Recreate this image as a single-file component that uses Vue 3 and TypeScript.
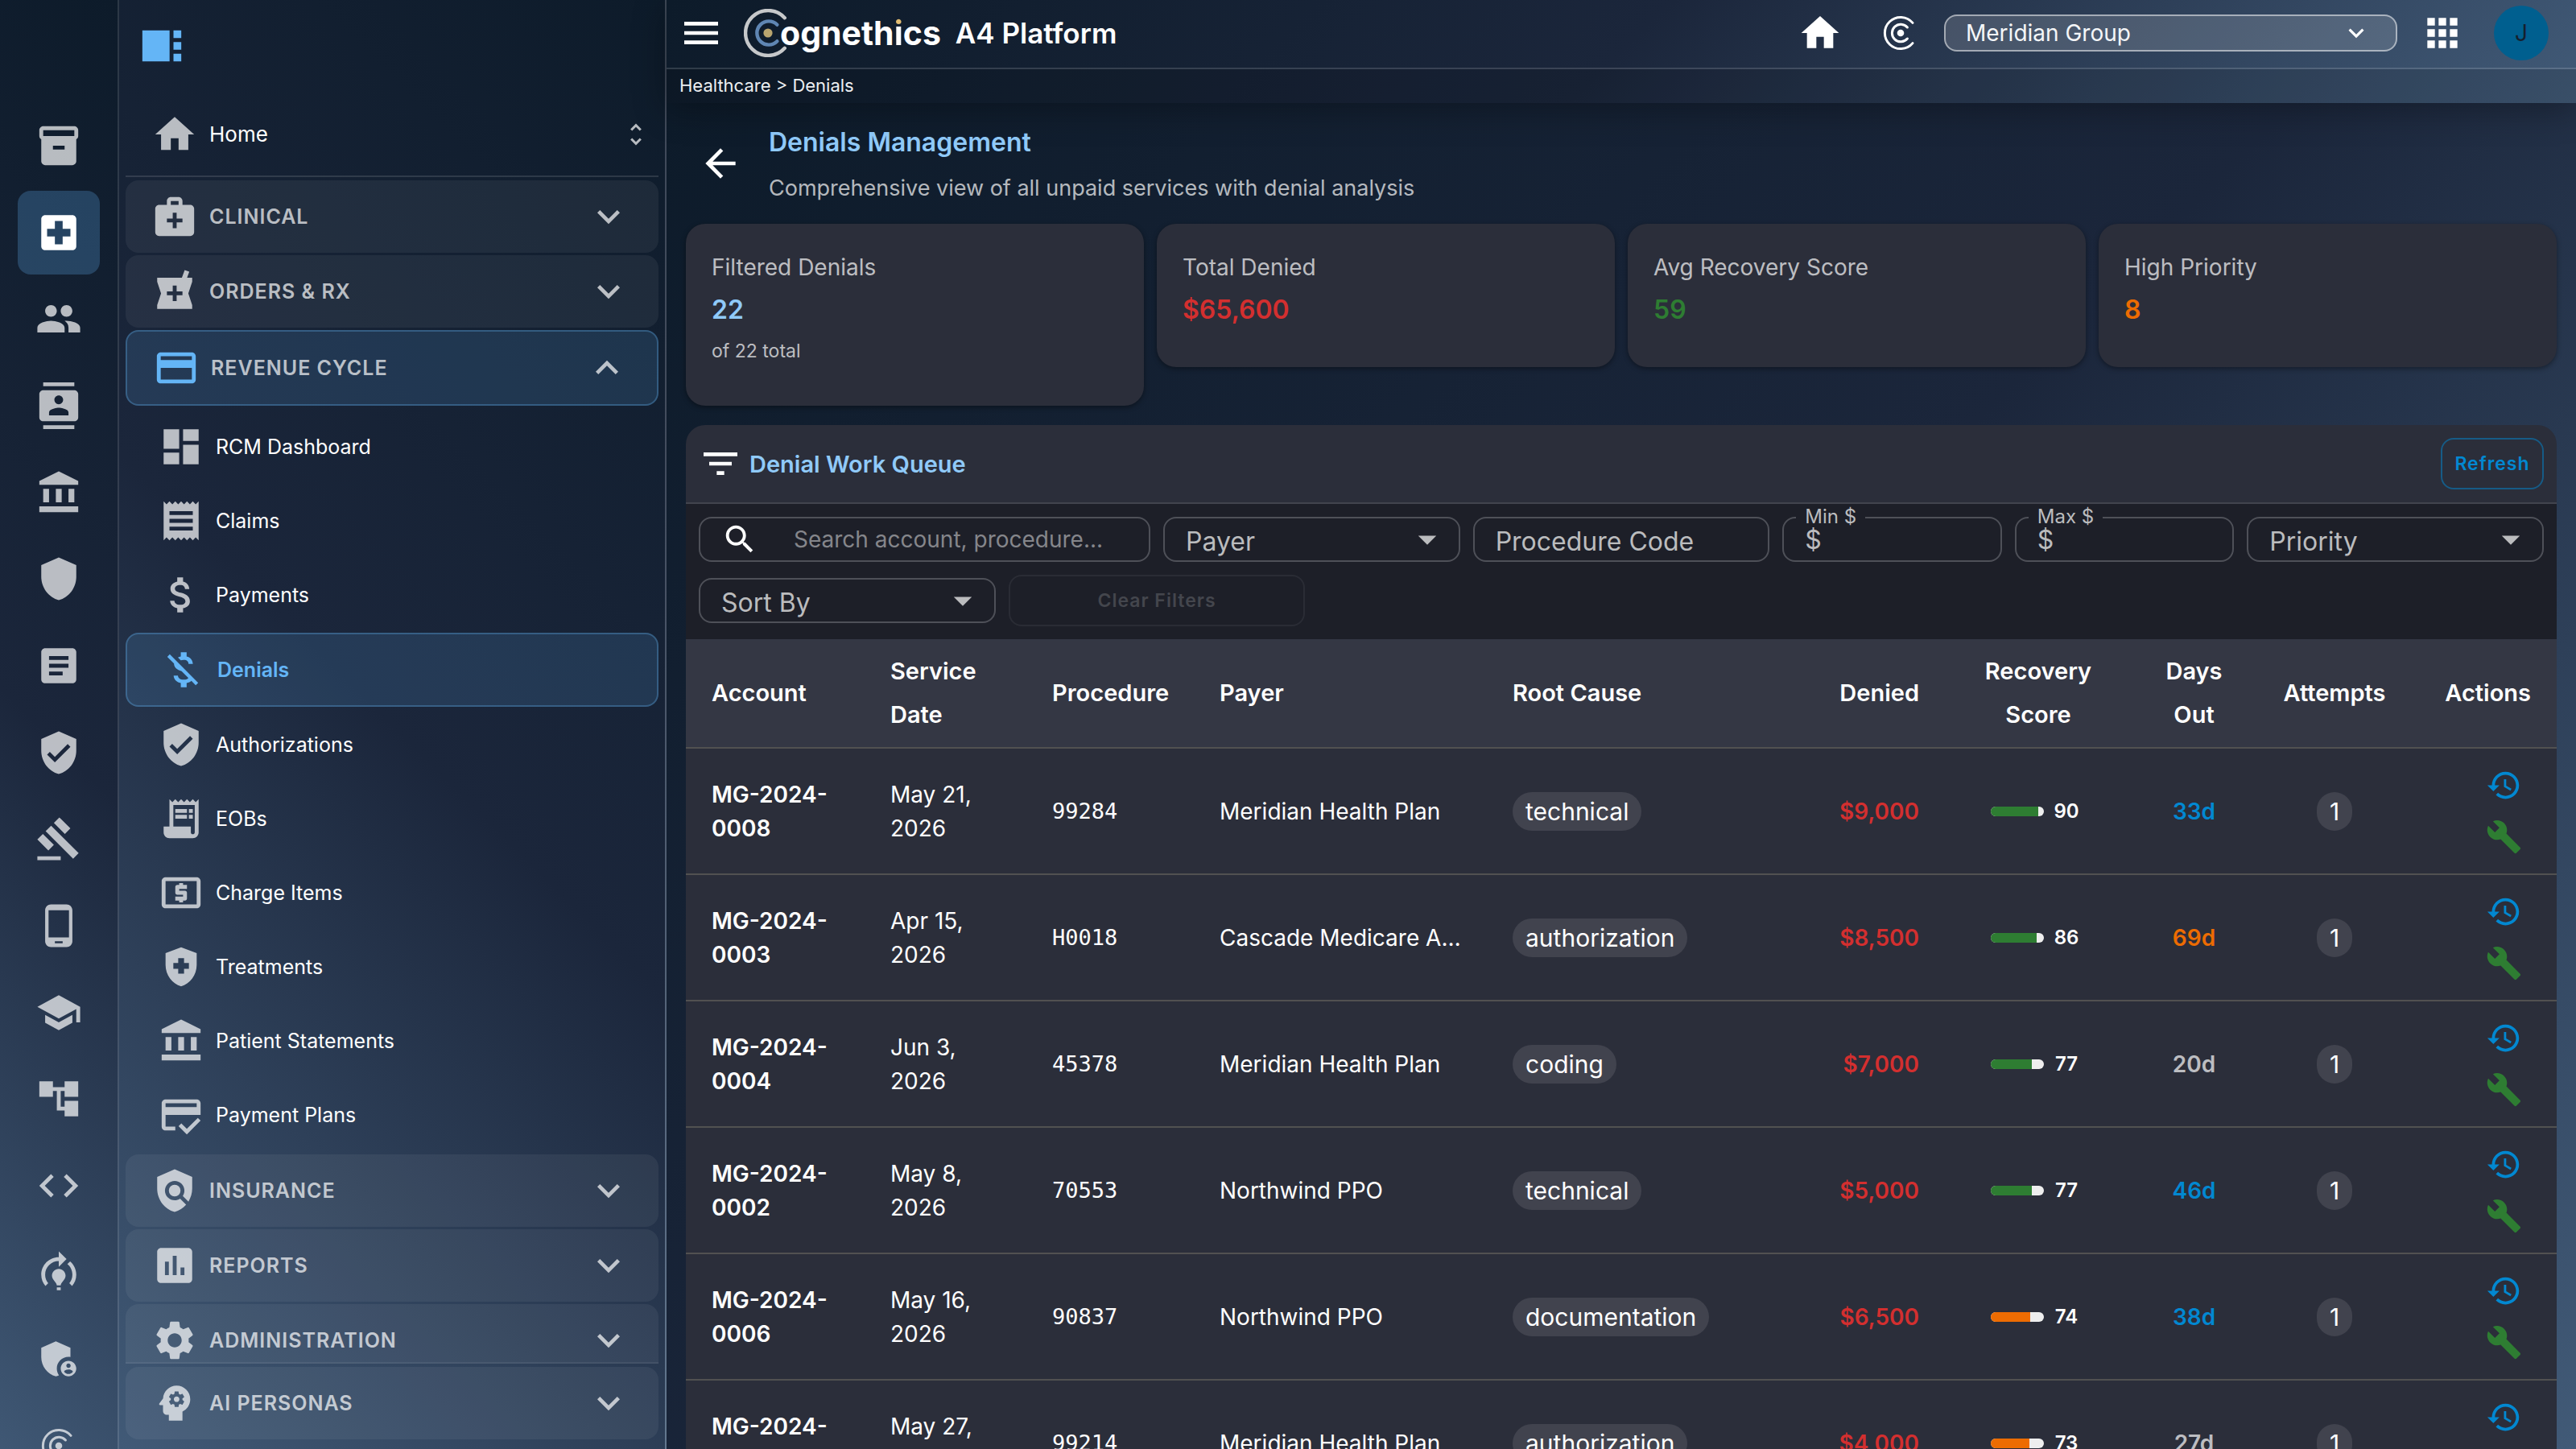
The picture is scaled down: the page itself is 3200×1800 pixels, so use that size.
<script setup lang="ts">
import { h, ref } from 'vue'

const paths: Record<string, string> = {
  archive: 'M20 2H4c-1 0-2 .9-2 2v3.01c0 .72.43 1.34 1 1.69V20c0 1.1 1.1 2 2 2h14c.9 0 2-.9 2-2V8.7c.57-.35 1-.97 1-1.69V4c0-1.1-1-2-2-2zm-5 12H9v-2h6v2zm5-7H4V4h16v3z',
  hospital: 'M19 3H5c-1.1 0-1.99.9-1.99 2L3 19c0 1.1.9 2 2 2h14c1.1 0 2-.9 2-2V5c0-1.1-.9-2-2-2zm-1 11h-4v4h-4v-4H6v-4h4V6h4v4h4v4z',
  people: 'M16 11c1.66 0 2.99-1.34 2.99-3S17.66 5 16 5s-3 1.34-3 3 1.34 3 3 3zm-8 0c1.66 0 2.99-1.34 2.99-3S9.66 5 8 5 5 6.34 5 8s1.34 3 3 3zm0 2c-2.33 0-7 1.17-7 3.5V19h14v-2.5c0-2.33-4.67-3.5-7-3.5zm8 0c-.29 0-.62.02-.97.05 1.16.84 1.97 1.97 1.97 3.45V19h6v-2.5c0-2.33-4.67-3.5-7-3.5z',
  contacts: 'M20 0H4v2h16V0zM4 24h16v-2H4v2zM20 4H4c-1.1 0-2 .9-2 2v12c0 1.1.9 2 2 2h16c1.1 0 2-.9 2-2V6c0-1.1-.9-2-2-2zm-8 2.75c1.24 0 2.25 1.01 2.25 2.25s-1.01 2.25-2.25 2.25S9.75 10.24 9.75 9 10.76 6.75 12 6.75zM17 17H7v-1.5c0-1.67 3.33-2.5 5-2.5s5 .83 5 2.5V17z',
  bank: 'M4 10h3v7H4zM10.5 10h3v7h-3zM2 19h20v3H2zM17 10h3v7h-3zM12 1 2 6v2h20V6z',
  shield: 'M12 1 3 5v6c0 5.55 3.84 10.74 9 12 5.16-1.26 9-6.45 9-12V5l-9-4z',
  article: 'M19 3H5c-1.1 0-2 .9-2 2v14c0 1.1.9 2 2 2h14c1.1 0 2-.9 2-2V5c0-1.1-.9-2-2-2zm-5 14H7v-2h7v2zm3-4H7v-2h10v2zm0-4H7V7h10v2z',
  verified: 'M12 1L3 5v6c0 5.55 3.84 10.74 9 12 5.16-1.26 9-6.45 9-12V5l-9-4zm-2 16l-4-4 1.41-1.41L10 14.17l6.59-6.59L18 9l-8 8z',
  gavel: 'M1 21h12v2H1zM5.245 8.07l2.83-2.827 14.14 14.142-2.828 2.828zM12.317 1l5.657 5.656-2.83 2.83-5.654-5.66zM3.825 9.485l5.657 5.657-2.828 2.828-5.657-5.657z',
  phone: 'M16 1H8C6.34 1 5 2.34 5 4v16c0 1.66 1.34 3 3 3h8c1.66 0 3-1.34 3-3V4c0-1.66-1.34-3-3-3zm-2 20h-4v-1h4v1zm3.25-3H6.75V4h10.5v14z',
  school: 'M5 13.18v4L12 21l7-3.82v-4L12 17l-7-3.82zM12 3L1 9l11 6 9-4.91V17h2V9L12 3z',
  tree: 'M22 11V3h-7v3H9V3H2v8h7V8h2v10h4v3h7v-8h-7v3h-2V8h2v3z',
  code: 'M9.4 16.6L4.8 12l4.6-4.6L8 6l-6 6 6 6 1.4-1.4zm5.2 0l4.6-4.6-4.6-4.6L16 6l6 6-6 6-1.4-1.4z',
  training: 'M15.5 13.5c0 2-2.5 3.5-2.5 5h-2c0-1.5-2.5-3-2.5-5 0-1.93 1.57-3.5 3.5-3.5s3.5 1.57 3.5 3.5zm-2.5 6h-2V21h2v-1.5zm6-6.5c0 1.68-.59 3.21-1.58 4.42l1.42 1.42C20.18 17.27 21 15.23 21 13c0-2.74-1.23-5.19-3.16-6.84l-1.42 1.42C17.99 8.86 19 10.82 19 13zm-3-8-4-4v3c-4.97 0-9 4.03-9 9 0 2.23.82 4.27 2.16 5.84l1.42-1.42C5.59 16.21 5 14.68 5 13c0-3.86 3.14-7 7-7v3l4-4z',
  admin: 'M17 11c.34 0 .67.04 1 .09V6.27L10.5 3 3 6.27v4.91c0 4.54 3.2 8.79 7.5 9.82.55-.13 1.08-.32 1.6-.55-.69-.98-1.1-2.17-1.1-3.45 0-3.31 2.69-6 6-6zM17 13c-2.21 0-4 1.79-4 4s1.79 4 4 4 4-1.79 4-4-1.79-4-4-4zm0 1.38c.62 0 1.12.51 1.12 1.12s-.51 1.12-1.12 1.12-1.12-.51-1.12-1.12.5-1.12 1.12-1.12zm0 5.37c-.93 0-1.74-.46-2.24-1.17.05-.72 1.51-1.08 2.24-1.08s2.19.36 2.24 1.08c-.5.71-1.31 1.17-2.24 1.17z',
  sidebar: 'M16 20H2V4h14v16zm2-12h4V4h-4v4zm0 12h4v-4h-4v4zm0-6h4v-4h-4v4z',
  home: 'M10 20v-6h4v6h5v-8h3L12 3 2 12h3v8z',
  unfold: 'M12 5.83L15.17 9l1.41-1.41L12 3 7.41 7.59 8.83 9 12 5.83zm0 12.34L8.83 15l-1.41 1.41L12 21l4.59-4.59L15.17 15 12 18.17z',
  medical: 'M20 6h-4V4c0-1.1-.9-2-2-2h-4c-1.1 0-2 .9-2 2v2H4c-1.1 0-2 .9-2 2v12c0 1.1.9 2 2 2h16c1.1 0 2-.9 2-2V8c0-1.1-.9-2-2-2zM10 4h4v2h-4V4zm6 11h-3v3h-2v-3H8v-2h3v-3h2v3h3v2z',
  pharmacy: 'M21 5h-2.64l1.14-3.14L17.15 1l-1.46 4H3v2l2 6-2 6v2h18v-2l-2-6 2-6V5zm-5 9h-3v3h-2v-3H8v-2h3V9h2v3h3v2z',
  card: 'M20 4H4c-1.11 0-1.99.89-1.99 2L2 18c0 1.11.89 2 2 2h16c1.11 0 2-.89 2-2V6c0-1.11-.89-2-2-2zm0 14H4v-6h16v6zm0-10H4V6h16v2z',
  dashboard: 'M3 13h8V3H3v10zm0 8h8v-6H3v6zm10 0h8V11h-8v10zm0-18v6h8V3h-8z',
  receipt: 'M18 17H6v-2h12v2zm0-4H6v-2h12v2zm0-4H6V7h12v2zM3 22l1.5-1.5L6 22l1.5-1.5L9 22l1.5-1.5L12 22l1.5-1.5L15 22l1.5-1.5L18 22l1.5-1.5L21 22V2l-1.5 1.5L18 2l-1.5 1.5L15 2l-1.5 1.5L12 2l-1.5 1.5L9 2 7.5 3.5 6 2 4.5 3.5 3 2v20z',
  money: 'M11.8 10.9c-2.27-.59-3-1.2-3-2.15 0-1.09 1.01-1.85 2.7-1.85 1.78 0 2.44.85 2.5 2.1h2.21c-.07-1.72-1.12-3.3-3.21-3.81V3h-3v2.16c-1.94.42-3.5 1.68-3.5 3.61 0 2.31 1.91 3.46 4.7 4.13 2.5.6 3 1.48 3 2.41 0 .69-.49 1.79-2.7 1.79-2.06 0-2.87-.92-2.98-2.1h-2.2c.12 2.19 1.76 3.42 3.68 3.83V21h3v-2.15c1.95-.37 3.5-1.5 3.5-3.55 0-2.84-2.43-3.81-4.7-4.4z',
  moneyOff: 'M12.5 6.9c1.78 0 2.44.85 2.5 2.1h2.21c-.07-1.72-1.12-3.3-3.21-3.81V3h-3v2.16c-.53.12-1.03.3-1.48.54l1.47 1.47c.41-.17.91-.27 1.51-.27zM5.33 4.06L4.06 5.33 7.5 8.77c0 2.08 1.56 3.21 3.91 3.91l3.51 3.51c-.34.48-1.05.91-2.42.91-2.06 0-2.87-.92-2.98-2.1h-2.2c.12 2.19 1.76 3.42 3.68 3.83V21h3v-2.15c.96-.18 1.82-.55 2.45-1.12l2.22 2.22 1.27-1.27L5.33 4.06z',
  receiptLong: 'M19.5 3.5 18 2l-1.5 1.5L15 2l-1.5 1.5L12 2l-1.5 1.5L9 2 7.5 3.5 6 2v14H3v3c0 1.66 1.34 3 3 3h12c1.66 0 3-1.34 3-3V2l-1.5 1.5zM19 19c0 .55-.45 1-1 1s-1-.45-1-1v-3H8V5h11v14zM9 7h6v2H9zM16 7h2v2h-2zM9 10h6v2H9zM16 10h2v2h-2z',
  atm: 'M11 17h2v-1h1c.55 0 1-.45 1-1v-3c0-.55-.45-1-1-1h-3v-1h4V8h-2V7h-2v1h-1c-.55 0-1 .45-1 1v3c0 .55.45 1 1 1h3v1H9v2h2v1zM20 4H4c-1.11 0-1.99.89-1.99 2L2 18c0 1.11.89 2 2 2h16c1.11 0 2-.89 2-2V6c0-1.11-.89-2-2-2zm0 14H4V6h16v12z',
  health: 'M10.5 13H8v-3h2.5V7.5h3V10H16v3h-2.5v2.5h-3V13zM12 2 4 5v6.09c0 5.05 3.41 9.76 8 10.91 4.59-1.15 8-5.86 8-10.91V5l-8-3z',
  creditScore: 'M20 4H4c-1.11 0-1.99.89-1.99 2L2 18c0 1.11.89 2 2 2h5v-2H4v-6h18V6c0-1.11-.89-2-2-2zm0 4H4V6h16v2zm-5.07 11.17-2.83-2.83-1.41 1.41L14.93 22 22 14.93l-1.41-1.41-5.66 5.65z',
  policy: 'M21 5l-9-4-9 4v6c0 5.55 3.84 10.74 9 12 2.3-.56 4.33-1.9 5.88-3.71l-3.12-3.12c-1.94 1.29-4.58 1.07-6.29-.64-1.95-1.95-1.95-5.12 0-7.07 1.95-1.95 5.12-1.95 7.07 0 1.71 1.71 1.92 4.35.64 6.29l2.9 2.9C20.29 15.69 21 13.38 21 11V5zM12 9a3 3 0 1 0 0 6 3 3 0 0 0 0-6z',
  assessment: 'M19 3H5c-1.1 0-2 .9-2 2v14c0 1.1.9 2 2 2h14c1.1 0 2-.9 2-2V5c0-1.1-.9-2-2-2zM9 17H7v-7h2v7zm4 0h-2V7h2v10zm4 0h-2v-4h2v4z',
  settings: 'M19.14 12.94c.04-.3.06-.61.06-.94 0-.32-.02-.64-.07-.94l2.03-1.58c.18-.14.23-.41.12-.61l-1.92-3.32c-.12-.22-.37-.29-.59-.22l-2.39.96c-.5-.38-1.03-.7-1.62-.94l-.36-2.54c-.04-.24-.24-.41-.48-.41h-3.84c-.24 0-.43.17-.47.41l-.36 2.54c-.59.24-1.13.57-1.62.94l-2.39-.96c-.22-.08-.47 0-.59.22L2.74 8.87c-.12.21-.08.47.12.61l2.03 1.58c-.05.3-.09.63-.09.94s.02.64.07.94l-2.03 1.58c-.18.14-.23.41-.12.61l1.92 3.32c.12.22.37.29.59.22l2.39-.96c.5.38 1.03.7 1.62.94l.36 2.54c.05.24.24.41.48.41h3.84c.24 0 .44-.17.47-.41l.36-2.54c.59-.24 1.13-.56 1.62-.94l2.39.96c.22.08.47 0 .59-.22l1.92-3.32c.12-.22.07-.47-.12-.61l-2.01-1.58zM12 15.6c-1.98 0-3.6-1.62-3.6-3.6s1.62-3.6 3.6-3.6 3.6 1.62 3.6 3.6-1.62 3.6-3.6 3.6z',
  psychology: 'M13 8.57c-.79 0-1.43.64-1.43 1.43s.64 1.43 1.43 1.43 1.43-.64 1.43-1.43-.64-1.43-1.43-1.43zM13 3C9.25 3 6.2 5.94 6.02 9.64L4.1 12.2c-.25.33-.01.8.4.8H6v3c0 1.1.9 2 2 2h1v3h7v-4.68c2.36-1.12 4-3.53 4-6.32 0-3.87-3.13-7-7-7zm3 7c0 .13-.01.26-.02.39l.83.66c.08.06.1.16.05.25l-.8 1.39c-.05.09-.16.12-.24.09l-.99-.4c-.21.16-.43.29-.67.39L14 13.83c-.01.1-.1.17-.2.17h-1.6c-.1 0-.18-.07-.2-.17l-.15-1.06c-.25-.1-.47-.23-.68-.39l-.99.4c-.09.03-.2 0-.25-.09l-.8-1.39c-.05-.08-.03-.19.05-.25l.84-.66c-.01-.13-.02-.26-.02-.39s.02-.27.04-.39l-.85-.66c-.08-.06-.1-.16-.05-.26l.8-1.38c.05-.09.15-.12.24-.09l1 .4c.2-.15.43-.29.67-.39L12 6.17c.02-.1.1-.17.2-.17h1.6c.1 0 .18.07.2.17l.15 1.06c.24.1.46.23.67.39l1-.4c.09-.03.2 0 .24.09l.8 1.38c.05.09.03.2-.05.26l-.85.66c.03.12.04.25.04.39z',
  down: 'M16.59 8.59L12 13.17 7.41 8.59 6 10l6 6 6-6z',
  up: 'M12 8l-6 6 1.41 1.41L12 10.83l4.59 4.58L18 14z',
  menu: 'M3 18h18v-2H3v2zm0-5h18v-2H3v2zm0-7v2h18V6H3z',
  apps: 'M4 8h4V4H4v4zm6 12h4v-4h-4v4zm-6 0h4v-4H4v4zm0-6h4v-4H4v4zm6 0h4v-4h-4v4zm6-10v4h4V4h-4zm-6 4h4V4h-4v4zm6 6h4v-4h-4v4zm0 6h4v-4h-4v4z',
  back: 'M20 11H7.83l5.59-5.59L12 4l-8 8 8 8 1.41-1.41L7.83 13H20v-2z',
  filter: 'M10 18h4v-2h-4v2zM3 6v2h18V6H3zm3 7h12v-2H6v2z',
  search: 'M15.5 14h-.79l-.28-.27C15.41 12.59 16 11.11 16 9.5 16 5.91 13.09 3 9.5 3S3 5.91 3 9.5 5.91 16 9.5 16c1.61 0 3.09-.59 4.23-1.57l.27.28v.79l5 4.99L20.49 19l-4.99-5zm-6 0C7.01 14 5 11.99 5 9.5S7.01 5 9.5 5 14 7.01 14 9.5 11.99 14 9.5 14z',
  caret: 'M7 10l5 5 5-5z',
  history: 'M13 3c-4.97 0-9 4.03-9 9H1l3.89 3.89.07.14L9 12H6c0-3.87 3.13-7 7-7s7 3.13 7 7-3.13 7-7 7c-1.93 0-3.68-.79-4.94-2.06l-1.42 1.42C8.27 19.99 10.51 21 13 21c4.97 0 9-4.03 9-9s-4.03-9-9-9zm-1 5v5l4.28 2.54.72-1.21-3.5-2.08V8H12z',
  build: 'M22.7 19l-9.1-9.1c.9-2.3.4-5-1.5-6.9-2-2-5-2.4-7.4-1.3L9 6 6 9 1.6 4.7C.4 7.1.9 10.1 2.9 12.1c1.9 1.9 4.6 2.4 6.9 1.5l9.1 9.1c.4.4 1 .4 1.4 0l2.3-2.3c.5-.4.5-1.1.1-1.4z',
}

const Icon = (props: { name: string }) =>
  h('svg', { viewBox: '0 0 24 24', 'aria-hidden': 'true', fill: 'currentColor' }, [
    h('path', { d: paths[props.name], 'fill-rule': 'evenodd' }),
  ])
Icon.props = ['name']

// Concentric brand mark
const Mark = () =>
  h('svg', { viewBox: '0 0 44 44', 'aria-hidden': 'true', fill: 'none', stroke: 'currentColor', 'stroke-width': 3, 'stroke-linecap': 'round' }, [
    h('path', { d: 'M37 9.4a19.6 19.6 0 1 0 0 25.2' }),
    h('path', { d: 'M30.4 15a10.8 10.8 0 1 0 0 14' }),
    h('circle', { cx: 22, cy: 22, r: 4.3, fill: 'currentColor', stroke: 'none' }),
  ])

const rail = [
  ['archive', 'Records'], ['hospital', 'Healthcare'], ['people', 'People'], ['contacts', 'Contacts'],
  ['bank', 'Finance'], ['shield', 'Security'], ['article', 'Documents'], ['verified', 'Compliance'],
  ['gavel', 'Legal'], ['phone', 'Mobile'], ['school', 'Learning'], ['tree', 'Workflows'],
  ['code', 'Developer'], ['training', 'Models'], ['admin', 'Admin'],
]

const sections = [
  { icon: 'medical', label: 'Clinical' },
  { icon: 'pharmacy', label: 'Orders & Rx' },
  {
    icon: 'card', label: 'Revenue Cycle', open: true,
    items: [
      { icon: 'dashboard', label: 'RCM Dashboard' },
      { icon: 'receipt', label: 'Claims' },
      { icon: 'money', label: 'Payments' },
      { icon: 'moneyOff', label: 'Denials', active: true },
      { icon: 'verified', label: 'Authorizations' },
      { icon: 'receiptLong', label: 'EOBs' },
      { icon: 'atm', label: 'Charge Items' },
      { icon: 'health', label: 'Treatments' },
      { icon: 'bank', label: 'Patient Statements' },
      { icon: 'creditScore', label: 'Payment Plans' },
    ],
  },
  { icon: 'policy', label: 'Insurance' },
  { icon: 'assessment', label: 'Reports' },
  { icon: 'settings', label: 'Administration' },
]

const stats = [
  { label: 'Filtered Denials', value: '22', tone: 'primary', note: 'of 22 total' },
  { label: 'Total Denied', value: '$65,600', tone: 'error' },
  { label: 'Avg Recovery Score', value: '59', tone: 'success' },
  { label: 'High Priority', value: '8', tone: 'warning' },
]

const rows = [
  { account: 'MG-2024-0008', date: 'May 21, 2026', code: '99284', payer: 'Meridian Health Plan', cause: 'technical', denied: '$9,000', score: 90, days: 33 },
  { account: 'MG-2024-0003', date: 'Apr 15, 2026', code: 'H0018', payer: 'Cascade Medicare Advantage', cause: 'authorization', denied: '$8,500', score: 86, days: 69 },
  { account: 'MG-2024-0004', date: 'Jun 3, 2026', code: '45378', payer: 'Meridian Health Plan', cause: 'coding', denied: '$7,000', score: 77, days: 20 },
  { account: 'MG-2024-0002', date: 'May 8, 2026', code: '70553', payer: 'Northwind PPO', cause: 'technical', denied: '$5,000', score: 77, days: 46 },
  { account: 'MG-2024-0006', date: 'May 16, 2026', code: '90837', payer: 'Northwind PPO', cause: 'documentation', denied: '$6,500', score: 74, days: 38 },
  { account: 'MG-2024-0005', date: 'May 27, 2026', code: '99214', payer: 'Meridian Health Plan', cause: 'authorization', denied: '$4,000', score: 73, days: 27 },
]

const daysTone = (d: number) => (d > 60 ? 'warning' : d > 30 ? 'info' : 'muted')
const scoreTone = (s: number) => (s >= 75 ? 'good' : 'fair')

const search = ref('')
const procedure = ref('')
const min = ref('')
const max = ref('')
</script>

<template>
  <div class="app">
    <nav class="rail" aria-label="Modules">
      <button v-for="[icon, label] in rail" :key="label" class="rail-btn" :class="{ on: icon === 'hospital' }" :aria-label="label">
        <Icon :name="icon" class="ic" />
      </button>
      <button class="rail-btn" aria-label="Cognethics"><Mark class="mark" /></button>
    </nav>

    <aside class="side">
      <div class="side-top">
        <button class="collapse" aria-label="Collapse sidebar"><Icon name="sidebar" class="ic" /></button>
      </div>
      <a class="home" href="#">
        <Icon name="home" class="ic" /><span>Home</span><Icon name="unfold" class="unfold" />
      </a>
      <div class="side-scroll">
        <template v-for="s in sections" :key="s.label">
          <button class="section" :class="{ open: s.open }">
            <Icon :name="s.icon" class="ic" /><span>{{ s.label }}</span><Icon :name="s.open ? 'up' : 'down'" class="chev" />
          </button>
          <ul v-if="s.items" class="items">
            <li v-for="i in s.items" :key="i.label">
              <a href="#" class="item" :class="{ active: i.active }"><Icon :name="i.icon" class="ic" /><span>{{ i.label }}</span></a>
            </li>
          </ul>
        </template>
      </div>
      <div class="side-foot">
        <button class="section"><Icon name="psychology" class="ic" /><span>AI Personas</span><Icon name="down" class="chev" /></button>
      </div>
    </aside>

    <div class="page">
      <header class="top">
        <div class="bar">
          <button class="plain" aria-label="Menu"><Icon name="menu" class="ic56" /></button>
          <div class="brand">
            <svg class="logo" viewBox="0 0 60 60" fill="none" stroke-linecap="round" aria-hidden="true">
              <path d="M50.8 11.2a28 28 0 1 0 0 37.6" stroke="#c6c8ca" stroke-width="4.4" />
              <path d="M41.4 19.8a14.6 14.6 0 1 0 0 20.4" stroke="#5f86b3" stroke-width="4.4" />
              <circle cx="30" cy="30" r="5.6" fill="#b9a56f" />
            </svg>
            <span class="word">ogneth<span class="gold">i</span>cs</span>
          </div>
          <span class="product">A4 Platform</span>
          <div class="tools">
            <button class="plain" aria-label="Home"><Icon name="home" class="ic56" /></button>
            <button class="plain" aria-label="Assistant"><Mark class="mark" /></button>
            <div class="org">
              <select aria-label="Organization"><option>Meridian Group</option></select>
              <Icon name="down" class="org-chev" />
            </div>
            <button class="plain" aria-label="Apps"><Icon name="apps" class="ic56" /></button>
            <button class="avatar" aria-label="Account">J</button>
          </div>
        </div>
        <div class="crumbs">Healthcare &gt; Denials</div>
      </header>

      <main class="main">
        <div class="title-row">
          <button class="plain back" aria-label="Back"><Icon name="back" class="ic56" /></button>
          <div>
            <h1>Denials Management</h1>
            <p>Comprehensive view of all unpaid services with denial analysis</p>
          </div>
        </div>

        <section class="stats">
          <article v-for="s in stats" :key="s.label" class="stat">
            <div class="stat-label">{{ s.label }}</div>
            <div class="stat-value" :class="s.tone">{{ s.value }}</div>
            <div v-if="s.note" class="stat-note">{{ s.note }}</div>
          </article>
        </section>

        <section class="queue">
          <div class="queue-head">
            <Icon name="filter" class="ic56" />
            <h2>Denial Work Queue</h2>
            <button class="refresh">Refresh</button>
          </div>

          <form class="filters" @submit.prevent>
            <div class="field w6">
              <Icon name="search" class="search-ic" />
              <input v-model="search" class="search" type="text" aria-label="Search" placeholder="Search account, procedure..." />
            </div>
            <div class="field w4">
              <select aria-label="Payer"><option>Payer</option></select><Icon name="caret" class="caret" />
            </div>
            <div class="field w4">
              <input v-model="procedure" class="big" type="text" aria-label="Procedure Code" placeholder="Procedure Code" />
            </div>
            <fieldset class="money w3">
              <legend><label for="min-amount">Min $</label></legend>
              <span>$</span><input id="min-amount" v-model="min" type="text" />
            </fieldset>
            <fieldset class="money w3">
              <legend><label for="max-amount">Max $</label></legend>
              <span>$</span><input id="max-amount" v-model="max" type="text" />
            </fieldset>
            <div class="field w4">
              <select aria-label="Priority"><option>Priority</option></select><Icon name="caret" class="caret" />
            </div>
            <div class="field w4">
              <select aria-label="Sort By"><option>Sort By</option></select><Icon name="caret" class="caret" />
            </div>
            <button class="clear w4" disabled>Clear Filters</button>
          </form>

          <table>
            <colgroup>
              <col class="c-acct" /><col class="c-date" /><col class="c-proc" /><col class="c-payer" /><col class="c-cause" />
              <col class="c-denied" /><col class="c-score" /><col class="c-days" /><col class="c-att" /><col class="c-act" />
            </colgroup>
            <thead>
              <tr>
                <th>Account</th><th>Service Date</th><th>Procedure</th><th>Payer</th><th>Root Cause</th>
                <th class="r">Denied</th><th class="c">Recovery Score</th><th class="c">Days Out</th><th class="c">Attempts</th><th class="r">Actions</th>
              </tr>
            </thead>
            <tbody>
              <tr v-for="r in rows" :key="r.account">
                <td class="acct">{{ r.account }}</td>
                <td>{{ r.date }}</td>
                <td class="mono">{{ r.code }}</td>
                <td class="payer">{{ r.payer }}</td>
                <td><span class="chip">{{ r.cause }}</span></td>
                <td class="r bold error">{{ r.denied }}</td>
                <td>
                  <div class="score">
                    <div class="track"><div class="fill" :class="scoreTone(r.score)" :style="{ width: r.score + '%' }"></div></div>
                    <span>{{ r.score }}</span>
                  </div>
                </td>
                <td class="c bold" :class="daysTone(r.days)">{{ r.days }}d</td>
                <td class="c"><span class="chip">1</span></td>
                <td class="acts">
                  <div class="act-col">
                    <button class="act info" aria-label="History"><Icon name="history" class="ic45" /></button>
                    <button class="act success" aria-label="Resolve"><Icon name="build" class="ic45" /></button>
                  </div>
                </td>
              </tr>
            </tbody>
          </table>
        </section>
      </main>
    </div>
  </div>
</template>

<style>
body { margin: 0; background: #0d1b2a; }
</style>

<style scoped>
.app {
  display: flex;
  height: 100vh;
  overflow: hidden;
  font-family: Inter, "Liberation Sans", sans-serif;
  font-size: 28px;
  color: #fff;
}
.app *, .app *::before { box-sizing: border-box; }
button, input, select { font: inherit; color: inherit; margin: 0; }
button { background: none; border: 0; padding: 0; cursor: pointer; }
a { color: inherit; text-decoration: none; }
svg { display: block; flex: none; }
h1, h2, p, ul { margin: 0; padding: 0; list-style: none; }
.ic { width: 58px; height: 58px; }
.ic56 { width: 56px; height: 56px; }
.ic45 { width: 45px; height: 45px; }
.mark { width: 44px; height: 44px; }
.plain { display: flex; }

/* Module rail */
.rail {
  flex: none;
  width: 148px;
  height: 1850px;
  padding-top: 127px;
  display: grid;
  grid-auto-rows: 1fr;
  place-items: center;
  border-right: 2px solid rgba(255, 255, 255, 0.12);
  background: linear-gradient(45deg, #415a77 0%, #1b263b 50%, #0d1b2a 100%);
}
.rail-btn {
  width: 102px;
  height: 104px;
  border-radius: 16px;
  display: flex;
  align-items: center;
  justify-content: center;
  color: rgba(255, 255, 255, 0.7);
}
.rail-btn.on { background: rgba(100, 181, 246, 0.25); color: #fff; }

/* Sidebar */
.side {
  flex: none;
  width: 680px;
  display: flex;
  flex-direction: column;
  padding: 0 8px 12px;
  border-right: 2px solid rgba(255, 255, 255, 0.18);
  background: linear-gradient(45deg, #415a77 0%, #1b263b 50%, #0d1b2a 100%);
}
.side-top { height: 115px; padding: 28px 0 0 16px; }
.collapse { color: #64b5f6; }
.home {
  display: flex;
  align-items: center;
  height: 105px;
  padding: 0 10px 0 32px;
  border-bottom: 2px solid rgba(255, 255, 255, 0.12);
  font-size: 26px;
}
.home .ic { color: rgba(255, 255, 255, 0.7); margin-right: 14px; }
.unfold { width: 36px; height: 36px; margin-left: auto; color: rgba(255, 255, 255, 0.7); }
.side-scroll { flex: 1; min-height: 0; overflow: hidden; padding-top: 4px; }
.section {
  width: 100%;
  height: 90px;
  margin-bottom: 3px;
  padding: 0 34px 0 32px;
  display: flex;
  align-items: center;
  border-radius: 16px;
  background: rgba(255, 255, 255, 0.06);
  color: rgba(255, 255, 255, 0.7);
  font-size: 25px;
  font-weight: 600;
  letter-spacing: 1px;
  text-transform: uppercase;
}
.section .ic { margin-right: 14px; }
.section .chev { width: 56px; height: 56px; margin-left: auto; }
.section.open {
  height: 94px;
  border: 2px solid rgba(100, 181, 246, 0.3);
  background: rgba(100, 181, 246, 0.15);
}
.section.open .ic { color: #64b5f6; }
.items { padding: 3px 0 2px; }
.item {
  display: flex;
  align-items: center;
  height: 90px;
  margin-bottom: 2px;
  padding-left: 40px;
  border-radius: 16px;
  font-size: 25px;
}
.item .ic { margin-right: 14px; color: rgba(255, 255, 255, 0.7); }
.item.active {
  height: 92px;
  border: 2px solid rgba(100, 181, 246, 0.3);
  background: rgba(100, 181, 246, 0.15);
  color: #64b5f6;
  font-weight: 600;
}
.item.active .ic { color: #64b5f6; }
.side-foot { flex: none; border-top: 2px solid rgba(255, 255, 255, 0.12); padding-top: 4px; }
.side-foot .section { margin: 0; }

/* Page */
.page {
  flex: 1;
  min-width: 0;
  display: flex;
  flex-direction: column;
}
.top {
  position: relative;
  z-index: 1;
  flex: none;
  background: linear-gradient(135deg, #0d1b2a 0%, #1b263b 50%, #415a77 100%);
  box-shadow: 0 8px 40px rgba(0, 0, 0, 0.3);
}
.bar {
  display: flex;
  align-items: center;
  height: 86px;
  padding: 0 34px 2px 15px;
  border-bottom: 2px solid rgba(255, 255, 255, 0.14);
}
.brand { display: flex; align-items: center; margin-left: 25px; }
.logo { width: 60px; height: 60px; }
.word {
  margin-left: -15px;
  font-size: 41px;
  line-height: 48px;
  font-weight: 700;
}
.gold {
  background: linear-gradient(#e3bd72 34%, #fff 34%);
  -webkit-background-clip: text;
  background-clip: text;
  color: transparent;
}
.product { margin-left: 18px; font-size: 35px; font-weight: 600; }
.tools { display: flex; align-items: center; margin-left: auto; }
.tools .mark { margin: 0 32px 0 50px; }
.org { position: relative; width: 563px; margin-right: 28px; }
.org select {
  width: 100%;
  height: 46px;
  padding: 0 80px 0 25px;
  appearance: none;
  border: 2px solid rgba(255, 255, 255, 0.5);
  border-radius: 16px;
  background: rgba(255, 255, 255, 0.15);
  font-size: 28px;
  color: #f4f6f8;
}
.org-chev { position: absolute; right: 32px; top: 4px; width: 38px; height: 38px; pointer-events: none; }
.avatar {
  width: 68px;
  height: 68px;
  margin-left: 36px;
  border-radius: 50%;
  background: #005f8f;
  color: #16202e;
}
.crumbs {
  height: 42px;
  padding-left: 16px;
  font-size: 22px;
  line-height: 40px;
  color: #eceff1;
  background: rgba(0, 0, 0, 0.12);
}
.main {
  flex: 1;
  min-height: 0;
  overflow: hidden;
  padding: 20px 24px 0;
  background: linear-gradient(135deg, #0d1b2a 0%, #1b263b 50%, #415a77 100%);
}
.title-row { display: flex; align-items: center; height: 114px; margin-bottom: 16px; }
.back { margin: 0 32px 4px 15px; }
h1 { font-size: 32px; line-height: 58px; font-weight: 600; color: #90caf9; }
.title-row p { font-size: 27px; line-height: 56px; color: rgba(255, 255, 255, 0.7); }

.stats { display: flex; align-items: flex-start; gap: 16px; margin-bottom: 24px; }
.stat {
  flex: 1;
  padding: 32px 32px 40px;
  border-radius: 24px;
  background: #2b2e3a;
  box-shadow: 0 2px 6px rgba(0, 0, 0, 0.4);
}
.stat-label { line-height: 44px; color: rgba(255, 255, 255, 0.7); }
.stat-value { font-size: 32px; line-height: 62px; font-weight: 600; }
.stat-note { margin-bottom: 8px; font-size: 23px; line-height: 40px; color: rgba(255, 255, 255, 0.7); }
.primary { color: #90caf9; }
.error { color: #d32f2f; }
.success { color: #2e7d32; }
.warning { color: #ed6c02; }
.info { color: #0288d1; }
.muted { color: rgba(255, 255, 255, 0.7); }

/* Work queue */
.queue { border-radius: 24px 24px 0 0; overflow: hidden; background: #2b2e3a; }
.queue-head {
  display: flex;
  align-items: center;
  height: 98px;
  padding: 0 16px 0 15px;
  border-bottom: 2px solid #42444e;
}
h2 { margin-left: 8px; font-size: 29px; font-weight: 600; color: #90caf9; }
.refresh {
  width: 128px;
  height: 64px;
  margin-left: auto;
  border: 2px solid rgba(2, 136, 209, 0.5);
  border-radius: 16px;
  color: #0288d1;
  font-size: 23px;
  font-weight: 600;
  letter-spacing: 1px;
}
.filters {
  display: grid;
  grid-template-columns: repeat(24, 1fr);
  gap: 16px;
  align-items: center;
  padding: 16px;
  background: #1d1f28;
}
.w6 { grid-column: span 6; }
.w4 { grid-column: span 4; }
.w3 { grid-column: span 3; }
.field {
  position: relative;
  display: flex;
  align-items: center;
  height: 56px;
  border: 2px solid #4e5058;
  border-radius: 16px;
}
.field input, .field select, .money input {
  flex: 1;
  width: 100%;
  min-width: 0;
  height: 100%;
  padding: 0 26px;
  border: 0;
  background: none;
  appearance: none;
}
.field select, .field .big { padding-top: 4px; font-size: 32px; color: #bbbcbe; }
.field .big::placeholder { color: #bbbcbe; opacity: 1; }
.field option, .org option { color: #000; }
.field .search { padding: 0 26px 0 44px; }
.search::placeholder { color: #85868b; opacity: 1; }
.search-ic { width: 46px; height: 46px; margin-left: 26px; }
.caret { position: absolute; right: 12px; top: -1px; width: 54px; height: 54px; color: #bbbcbe; pointer-events: none; }
.money {
  display: flex;
  align-items: center;
  height: 56px;
  min-width: 0;
  margin: 0;
  padding: 0 26px 0 15px;
  border: 2px solid #4e5058;
  border-radius: 16px;
  font-size: 32px;
  color: #bbbcbe;
}
.money legend { height: 2px; padding: 0 11px; font-size: 24px; line-height: 0; }
.money span { margin-left: 11px; }
.money input { padding: 0 16px; }
.clear {
  height: 64px;
  border: 2px solid #2a2c35;
  border-radius: 16px;
  color: #44464d;
  font-size: 23px;
  font-weight: 600;
  letter-spacing: 1px;
}

table { width: 100%; table-layout: fixed; border-collapse: separate; border-spacing: 0; }
.c-acct { width: 222px; }
.c-date { width: 201px; }
.c-proc { width: 208px; }
.c-payer { width: 364px; }
.c-cause { width: 400px; }
.c-denied { width: 169px; }
.c-score { width: 232px; }
.c-days { width: 155px; }
.c-att { width: 194px; }
.c-act { width: 179px; }
th, td { padding: 0 32px; text-align: left; border-bottom: 2px solid #515151; }
th { padding-block: 13px; font-size: 29px; line-height: 54px; font-weight: 600; background: #343744; }
tbody tr { height: 157px; }
td { line-height: 42px; }
.r { text-align: right; }
.c { text-align: center; }
.acct { font-weight: 600; }
.bold { font-weight: 600; }
.mono { font-size: 27px; font-family: "DejaVu Sans Mono", monospace; }
.payer { overflow: hidden; text-overflow: ellipsis; white-space: nowrap; }
.chip {
  display: inline-flex;
  align-items: center;
  justify-content: center;
  height: 48px;
  min-width: 44px;
  padding: 0 16px;
  border-radius: 24px;
  background: #41434e;
  font-size: 30px;
  vertical-align: middle;
}
.c .chip { padding: 0 12px; }
.score { display: flex; align-items: center; justify-content: center; gap: 4px; margin: 0 -8px; }
.track { width: 66px; height: 12px; border-radius: 6px; overflow: hidden; background: #eee; }
.fill { height: 100%; }
.good { background: #2e7d32; }
.fair { background: #ed6c02; }
.score span { width: 48px; text-align: center; font-size: 24px; font-weight: 600; }
.act-col { display: flex; flex-direction: column; align-items: flex-end; }
.act { width: 68px; height: 64px; display: flex; align-items: center; justify-content: center; }
</style>
